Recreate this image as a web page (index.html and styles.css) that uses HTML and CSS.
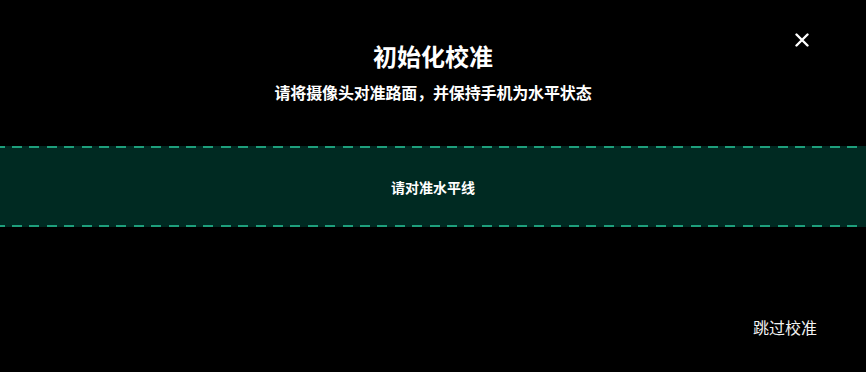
FILE: index.html
```html
<!DOCTYPE html>
<html lang="zh-CN">
<head>
<meta charset="utf-8">
<title>初始化校准</title>
<link rel="stylesheet" href="styles.css">
</head>
<body>
<div class="page">
  <header class="header">
    <div class="heading">
      <h1 class="title">初始化校准</h1>
      <p class="subtitle">请将摄像头对准路面，并保持手机为水平状态</p>
    </div>
    <button class="close" aria-label="关闭">
      <svg width="14" height="14" viewBox="0 0 14 14"><path d="M1.5 1.5 L12.5 12.5 M12.5 1.5 L1.5 12.5" stroke="#fff" stroke-width="2.4" stroke-linecap="round" fill="none"/></svg>
    </button>
  </header>
  <section class="band">
    <span class="band-label">请对准水平线</span>
  </section>
  <footer class="footer">
    <button class="skip">跳过校准</button>
  </footer>
</div>
</body>
</html>
```
FILE: styles.css
```css
html, body {
  margin: 0;
  padding: 0;
  background: #000;
}
body {
  font-family: "Noto Sans CJK SC", "Noto Sans", sans-serif;
  color: #fff;
}
.page {
  width: 866px;
  height: 372px;
  display: flex;
  flex-direction: column;
  overflow: hidden;
}
.header {
  display: grid;
  grid-template-columns: 1fr auto 1fr;
  padding-top: 28px;
}
.heading {
  grid-column: 2;
  display: flex;
  flex-direction: column;
  align-items: center;
  padding-top: 12px;
}
.title {
  margin: 0;
  font-size: 24px;
  line-height: 32px;
  font-weight: 700;
}
.subtitle {
  margin: 8px 0 0;
  font-size: 16px;
  line-height: 24px;
  font-weight: 700;
  letter-spacing: -0.15px;
}
.close {
  grid-column: 3;
  justify-self: end;
  align-self: start;
  width: 24px;
  height: 24px;
  margin-right: 52px;
  padding: 0;
  border: 0;
  background: none;
  display: flex;
  align-items: center;
  justify-content: center;
}
.band {
  margin-top: 42px;
  height: 81px;
  display: flex;
  align-items: center;
  justify-content: center;
  background:
    repeating-linear-gradient(90deg, #1e9f7c 0 10px, transparent 10px 17.4px) -5.4px 0 / 100% 2px no-repeat,
    repeating-linear-gradient(90deg, #1e9f7c 0 10px, transparent 10px 17.4px) -5.4px 79px / 100% 2px no-repeat,
    #002a22;
}
.band-label {
  font-size: 14px;
  line-height: 20px;
  font-weight: 700;
}
.footer {
  display: flex;
  justify-content: flex-end;
  margin-top: 88px;
  padding-right: 49px;
}
.skip {
  padding: 0;
  border: 0;
  background: none;
  color: #f2f2f2;
  font-family: inherit;
  font-size: 16px;
  line-height: 24px;
  font-weight: 400;
}
```
